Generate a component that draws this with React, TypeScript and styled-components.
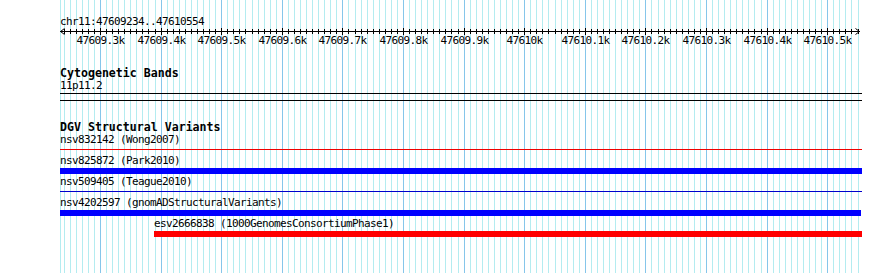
import React from 'react';
import styled, { createGlobalStyle } from 'styled-components';

const GlobalStyle = createGlobalStyle`
  html, body { margin: 0; padding: 0; background: #ffffff; }
  body { font-family: "DejaVu Sans Mono", "Liberation Mono", monospace; color: #000; }
`;

const REGION_START = 47609234;
const TRACK_LEFT = 60;
const TRACK_WIDTH = 802;
const MAJOR_REF_BP = 47609300;
const MAJOR_REF_X = 100; // page x of 47609300
const PX_PER_BP = 0.606;

const bpToX = (bp: number) => MAJOR_REF_X + (bp - MAJOR_REF_BP) * PX_PER_BP;

const Canvas = styled.div`
  display: grid;
  width: 890px;
  height: 273px;
  overflow: hidden;
  background: #ffffff;
`;

const GridLayer = styled.svg`
  grid-area: 1 / 1;
  display: block;
`;

const Content = styled.div`
  grid-area: 1 / 1;
  display: flex;
  flex-direction: column;
  padding-left: ${TRACK_LEFT}px;
  width: ${TRACK_WIDTH}px;
`;

const LocLabel = styled.div`
  margin-top: 15px;
  height: 13px;
  line-height: 14px;
  font-size: 11px;
  letter-spacing: -0.62px;
  white-space: nowrap;
`;

const RulerSvg = styled.svg`
  display: block;
  overflow: visible;
`;

const TrackHeading = styled.div<{ $gap: number }>`
  margin-top: ${(p) => p.$gap}px;
  height: 12px;
  line-height: 12px;
  font-size: 11.6px;
  font-weight: bold;
  white-space: nowrap;
`;

const BandLabel = styled.div`
  margin-top: 1px;
  height: 12px;
  line-height: 12px;
  font-size: 11px;
  letter-spacing: -0.62px;
  white-space: nowrap;
`;

const FeatureLabel = styled.div<{ $indent: number }>`
  height: 13px;
  line-height: 13px;
  font-size: 11px;
  letter-spacing: -0.62px;
  white-space: nowrap;
  padding-left: ${(p) => p.$indent}px;
`;

const BandBox = styled.div`
  margin-top: 1px;
  height: 6px;
  border-top: 1px solid #000;
  border-bottom: 1px solid #000;
`;

const FeatureRow = styled.div`
  display: flex;
  flex-direction: column;
  height: 21px;
`;

const BarSlot = styled.div`
  height: 8px;
`;

const Bar = styled.div<{ $thick: boolean; $color: string }>`
  height: ${(p) => (p.$thick ? 6 : 1)}px;
  margin-top: ${(p) => (p.$thick ? 1 : 3)}px;
  background: ${(p) => p.$color};
`;

type Feature = { name: string; start: number; end: number; thick: boolean; color: string };

const features: Feature[] = [
  { name: 'nsv832142 (Wong2007)', start: 60, end: 862, thick: false, color: '#ee0000' },
  { name: 'nsv825872 (Park2010)', start: 60, end: 862, thick: true, color: '#0000ff' },
  { name: 'nsv509405 (Teague2010)', start: 60, end: 862, thick: false, color: '#0000cc' },
  { name: 'nsv4202597 (gnomADStructuralVariants)', start: 60, end: 861, thick: true, color: '#0000ff' },
  { name: 'esv2666838 (1000GenomesConsortiumPhase1)', start: 154, end: 862, thick: true, color: '#ff0000' },
];

const gridTicks: { x: number; major: boolean; bp: number }[] = [];
for (let bp = 47609240; bp <= 47610550; bp += 10) {
  gridTicks.push({ x: Math.round(bpToX(bp)), major: bp % 100 === 0, bp });
}

const fmtLabel = (bp: number) => {
  const k = bp / 1000;
  return `${Number.isInteger(k) ? k.toFixed(0) : k.toFixed(1)}k`;
};

function Grid() {
  return (
    <GridLayer width={890} height={273}>
      <line x1={60.5} y1={0} x2={60.5} y2={273} stroke="#b4ecf0" strokeWidth={1} />
      {gridTicks.map((t) => (
        <line
          key={t.bp}
          x1={t.x + 0.5}
          y1={0}
          x2={t.x + 0.5}
          y2={273}
          stroke={t.major ? '#86c6ea' : '#b4ecf0'}
          strokeWidth={1}
        />
      ))}
    </GridLayer>
  );
}

function Ruler() {
  const w = TRACK_WIDTH;
  return (
    <RulerSvg width={w} height={20}>
      <line x1={0} y1={3.5} x2={w - 2} y2={3.5} stroke="#000" strokeWidth={1} />
      <path d="M0.5 3.5 L4.5 0.5 M0.5 3.5 L4.5 6.5" stroke="#000" strokeWidth={1} fill="none" />
      <path d={`M${w - 2.5} 3.5 L${w - 6.5} 0.5 M${w - 2.5} 3.5 L${w - 6.5} 6.5`} stroke="#000" strokeWidth={1} fill="none" />
      {gridTicks.map((t) => (
        <line
          key={t.bp}
          x1={t.x - TRACK_LEFT + 0.5}
          y1={t.major ? 0 : 1}
          x2={t.x - TRACK_LEFT + 0.5}
          y2={t.major ? 7 : 6}
          stroke="#000"
          strokeWidth={1}
        />
      ))}
      {gridTicks
        .filter((t) => t.major)
        .map((t) => (
          <text
            key={t.bp}
            x={t.x - TRACK_LEFT + 0.5}
            y={16}
            textAnchor="middle"
            fontFamily='"DejaVu Sans Mono", "Liberation Mono", monospace'
            fontSize={11}
            letterSpacing={-0.62}
            fill="#000"
          >
            {fmtLabel(t.bp)}
          </text>
        ))}
    </RulerSvg>
  );
}

export default function App() {
  return (
    <>
      <GlobalStyle />
      <Canvas>
        <Grid />
        <Content>
          <LocLabel>chr11:{REGION_START}..47610554</LocLabel>
          <Ruler />
          <TrackHeading $gap={19}>Cytogenetic Bands</TrackHeading>
          <BandLabel>11p11.2</BandLabel>
          <BandBox />
          <TrackHeading $gap={20}>DGV Structural Variants</TrackHeading>
          {features.map((f) => (
            <FeatureRow key={f.name}>
              <FeatureLabel $indent={f.start - TRACK_LEFT}>{f.name}</FeatureLabel>
              <BarSlot>
                <Bar
                  $thick={f.thick}
                  $color={f.color}
                  style={{ marginLeft: f.start - TRACK_LEFT, width: f.end - f.start }}
                />
              </BarSlot>
            </FeatureRow>
          ))}
        </Content>
      </Canvas>
    </>
  );
}
